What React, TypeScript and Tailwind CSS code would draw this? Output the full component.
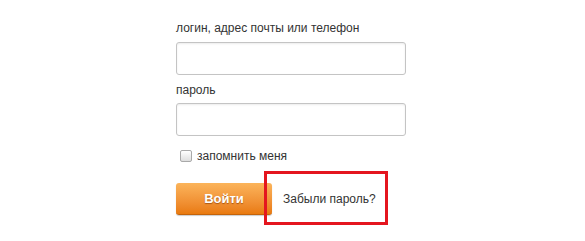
import React from "react";

const Field = ({ label, mt, gap }: { label: string; mt: string; gap: string }) => (
  <>
    <span className={`${mt} block h-4 leading-4 text-[12px] text-[#333]`}>{label}</span>
    <input
      type="text"
      className={`${gap} block w-[230px] h-[33px] rounded-[3px] border border-[#c4c4c4] bg-white shadow-[inset_0_1px_2px_rgba(0,0,0,0.08)] outline-none`}
    />
  </>
);

export default function App() {
  return (
    <div
      className="w-[585px] h-[241px] bg-white pl-[176px] pt-[20px] flex flex-col"
      style={{ fontFamily: '"Liberation Sans", Arial, sans-serif' }}
    >
      <Field label="логин, адрес почты или телефон" mt="mt-0" gap="mt-[6px]" />
      <Field label="пароль" mt="mt-[7px]" gap="mt-[5px]" />

      <label className="mt-[12px] flex items-center h-4 gap-[5px] text-[12px] leading-4 text-[#333]">
        <span className="ml-[4px] w-[12px] h-[12px] rounded-[2px] border border-[#a9a9a9] bg-gradient-to-b from-white to-[#dedede]" />
        <span>запомнить меня</span>
      </label>

      <div className="relative mt-[19px] flex items-center h-[32px]">
        <button className="w-[96px] h-[32px] rounded-[3px] border-b border-[#c4630a] bg-gradient-to-b from-[#fbb45a] to-[#e97a0d] shadow-[0_1px_1px_rgba(0,0,0,0.2)] text-white font-bold text-[13px] [text-shadow:0_1px_1px_rgba(120,50,0,0.6)]">
          Войти
        </button>
        <span className="ml-[11px] text-[12px] text-[#333]">Забыли пароль?</span>
        <div className="absolute left-[88px] top-[-12px] w-[124px] h-[54px] border-[3px] border-[#e4161f]" />
      </div>
    </div>
  );
}
